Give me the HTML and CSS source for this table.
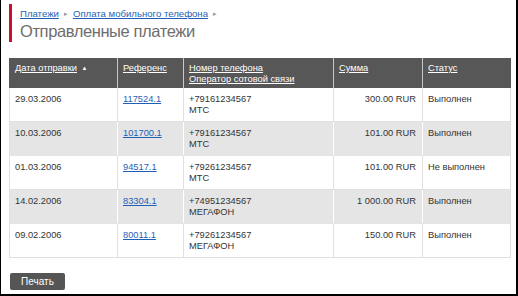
FILE: index.html
```html
<!DOCTYPE html>
<html lang="ru">
<head>
<meta charset="utf-8">
<link rel="stylesheet" href="styles.css">
</head>
<body>
<div class="frame">
  <div class="head">
    <div class="crumbs"><a href="#">Платежи</a><span class="sep">▸</span><a href="#">Оплата мобильного телефона</a><span class="sep">▸</span></div>
    <h1 class="title">Отправленные платежи</h1>
  </div>
  <table class="grid">
    <colgroup>
      <col class="c1"><col class="c2"><col class="c3"><col class="c4"><col class="c5">
    </colgroup>
    <thead>
      <tr>
        <th><a href="#">Дата отправки</a> <span class="arrow">▲</span></th>
        <th><a href="#">Референс</a></th>
        <th><a href="#">Номер телефона</a><br><a href="#">Оператор сотовой связи</a></th>
        <th><a href="#">Сумма</a></th>
        <th><a href="#">Статус</a></th>
      </tr>
    </thead>
    <tbody>
      <tr>
        <td>29.03.2006</td><td><a href="#">117524.1 </a></td><td>+79161234567<br>МТС</td><td class="num">300.00 RUR</td><td>Выполнен</td>
      </tr>
      <tr class="alt">
        <td>10.03.2006</td><td><a href="#">101700.1 </a></td><td>+79161234567<br>МТС</td><td class="num">101.00 RUR</td><td>Выполнен</td>
      </tr>
      <tr>
        <td>01.03.2006</td><td><a href="#">94517.1 </a></td><td>+79261234567<br>МТС</td><td class="num">101.00 RUR</td><td>Не выполнен</td>
      </tr>
      <tr class="alt">
        <td>14.02.2006</td><td><a href="#">83304.1 </a></td><td>+74951234567<br>МЕГАФОН</td><td class="num">1 000.00 RUR</td><td>Выполнен</td>
      </tr>
      <tr>
        <td>09.02.2006</td><td><a href="#">80011.1 </a></td><td>+79261234567<br>МЕГАФОН</td><td class="num">150.00 RUR</td><td>Выполнен</td>
      </tr>
    </tbody>
  </table>
  <div class="actions"><button class="btn" type="button">Печать</button></div>
</div>
</body>
</html>
```

FILE: styles.css
```css
html, body {
  margin: 0;
  padding: 0;
  background: #fff;
}
.frame {
  box-sizing: border-box;
  width: 518px;
  height: 296px;
  border-left: 1px solid #000;
  border-right: 2px solid #000;
  border-bottom: 2px solid #000;
  padding: 4px 6px 0 8px;
  font-family: "Liberation Sans", Arial, sans-serif;
  font-size: 9.3px;
  color: #333;
  overflow: hidden;
}
.head {
  border-left: 3px solid #c8102e;
  padding-left: 8px;
  height: 38px;
}
.crumbs {
  padding-top: 4px;
  line-height: 12px;
  font-size: 9.6px;
}
.crumbs a {
  color: #1f5fb5;
}
.sep {
  color: #999;
  font-size: 7px;
  margin: 0 5px;
  vertical-align: 1px;
}
.title {
  margin: 0;
  font-weight: normal;
  font-size: 16.5px;
  letter-spacing: -0.4px;
  line-height: 22px;
  color: #6e6e6e;
}
.grid {
  margin-top: 16px;
  width: 501px;
  border-collapse: collapse;
  table-layout: fixed;
}
.c1 { width: 108px; }
.c2 { width: 66px; }
.c3 { width: 150px; }
.c4 { width: 89px; }
.c5 { width: 88px; }
.grid th {
  background: #575757;
  color: #fff;
  font-weight: normal;
  text-align: left;
  vertical-align: top;
  padding: 5px 5px 0 5px;
  height: 25px;
  line-height: 11px;
  border-left: 1px solid #c8c8c8;
}
.grid th:first-child { border-left: 1px solid #575757; }
.grid th a { color: #fff; }
.arrow {
  font-size: 6px;
  vertical-align: 1px;
  margin-left: 2px;
}
.grid td {
  vertical-align: top;
  padding: 6px 5px 0 5px;
  height: 27px;
  line-height: 11px;
  border: 1px solid #e0e0e0;
  border-top: 0;
}
.grid td a { color: #1f5fb5; }
.grid tr.alt td {
  background: #e5e5e5;
  border-color: #e5e5e5 #fff;
}
.grid tr.alt td:first-child { border-left-color: #e0e0e0; }
.grid tr.alt td:last-child { border-right-color: #e0e0e0; }
.grid td.num {
  text-align: right;
  padding-right: 6px;
}
.actions {
  margin-top: 15px;
}
.btn {
  background: #555;
  color: #fff;
  border: 0;
  border-radius: 2px;
  font-family: "Liberation Sans", Arial, sans-serif;
  font-size: 10px;
  width: 55px;
  height: 17px;
  padding: 0;
  margin-left: 1px;
}
```
